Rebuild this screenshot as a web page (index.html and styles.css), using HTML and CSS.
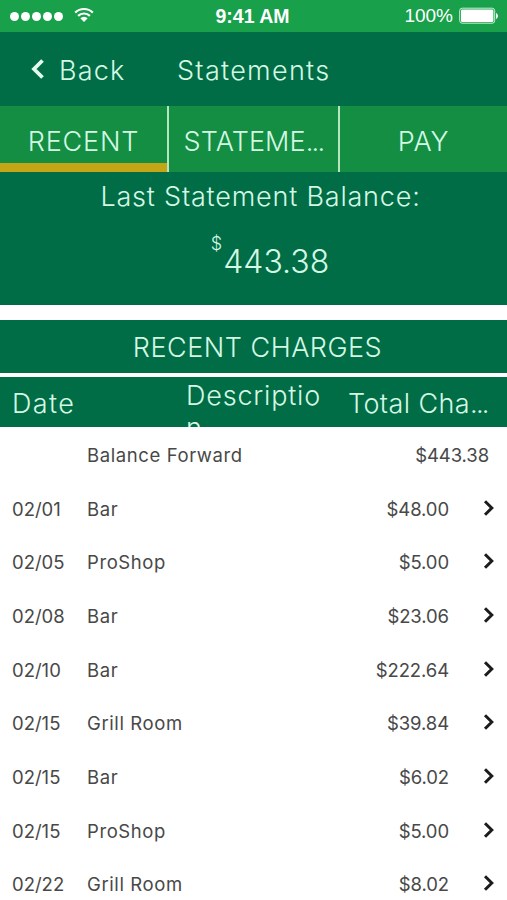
FILE: index.html
```html
<!DOCTYPE html>
<html lang="en">
<head>
    <meta charset="UTF-8">
    <meta name="viewport" content="width=device-width, initial-scale=1.0">
    <title>Statements</title>
    <link rel="stylesheet" href="styles.css">
</head>
<body>
    <!-- Status Bar -->
    <div class="status-bar">
        <div class="signal">
            <span class="dot"></span>
            <span class="dot"></span>
            <span class="dot"></span>
            <span class="dot"></span>
            <span class="dot"></span>
            <svg class="wifi" width="20" height="16" viewBox="0 0 20 16">
                <path d="M1.2 5.6a12.6 12.6 0 0 1 17.6 0M4.1 8.9a8.5 8.5 0 0 1 11.8 0" fill="none" stroke="#fff" stroke-width="2.2"/>
                <path d="M6.3 11.3a5.3 5.3 0 0 1 7.4 0L10 15z" fill="#fff"/>
            </svg>
        </div>
        <span class="time">9:41 AM</span>
        <div class="battery">
            <span class="percent">100%</span>
            <svg width="40" height="18" viewBox="0 0 40 18">
                <rect x="0.7" y="1.2" width="35" height="15" rx="2.5" fill="none" stroke="#c9f0d3" stroke-width="1"/>
                <rect x="2" y="2.5" width="32.4" height="12.4" rx="1.2" fill="#fff"/>
                <path d="M37 6c2.6 1 2.6 5 0 6z" fill="#fff"/>
            </svg>
        </div>
    </div>

    <header>
        <a href="#" class="back">
            <svg width="14" height="20" viewBox="0 0 14 20">
                <path d="M12.500 1.5L4 10l8.500 8.500" fill="none" stroke="#e3faec" stroke-width="3.8"/>
            </svg>
            <span>Back</span>
        </a>
        <h1>Statements</h1>
    </header>

    <nav class="tabs">
        <a href="#" class="tab active">RECENT</a>
        <a href="#" class="tab tab-statements"><span>STATEME<span class="dots">...</span></span></a>
        <a href="#" class="tab">PAY</a>
    </nav>

    <main>
        <section class="balance">
            <h2>Last Statement Balance:</h2>
            <p class="amount"><span class="currency">$</span><span class="value">443.38</span></p>
        </section>

        <h2 class="charges-title">RECENT CHARGES</h2>

        <div class="charges-head">
            <span class="head-date">Date</span>
            <span class="head-description">Descriptio<br>n</span>
            <span class="head-total">Total Cha<span class="dots">...</span></span>
        </div>

        <div class="charges" id="charges"></div>
    </main>

    <script>
        const charges = [
            { date: '', description: 'Balance Forward', total: '$443.38' },
            { date: '02/01', description: 'Bar', total: '$48.00' },
            { date: '02/05', description: 'ProShop', total: '$5.00' },
            { date: '02/08', description: 'Bar', total: '$23.06' },
            { date: '02/10', description: 'Bar', total: '$222.64' },
            { date: '02/15', description: 'Grill Room', total: '$39.84' },
            { date: '02/15', description: 'Bar', total: '$6.02' },
            { date: '02/15', description: 'ProShop', total: '$5.00' },
            { date: '02/22', description: 'Grill Room', total: '$8.02' }
        ];

        const arrow = `
            <svg class="arrow" width="12" height="18" viewBox="0 0 12 18">
                <path d="M2 2.200l6.800 6.800-6.800 6.800" fill="none" stroke="#1c1c1c" stroke-width="3"/>
            </svg>
        `;

        document.getElementById('charges').innerHTML = charges.map((charge) => `
            <div class="charge">
                <span class="date">${charge.date}</span>
                <span class="description">${charge.description}</span>
                <span class="total">${charge.total}</span>
                ${charge.date ? arrow : ''}
            </div>
        `).join('');
    </script>
</body>
</html>
```

FILE: styles.css
```css
/* General Styles */
* {
    box-sizing: border-box;
}

body {
    margin: 0;
    height: 900px;
    overflow: hidden;
    background-color: #fff;
    color: #484848;
    font-family: Inter, "Liberation Sans", sans-serif;
}

h1, h2, p {
    margin: 0;
    font-weight: 300;
}

a {
    color: inherit;
    text-decoration: none;
}

svg {
    display: block;
    flex: none;
}

.dots {
    letter-spacing: -1.7px;
}

/* Status Bar */
.status-bar {
    display: grid;
    grid-template-columns: 1fr auto 1fr;
    align-items: center;
    height: 32px;
    padding: 0 8px 0 10px;
    background-color: #18a04b;
    color: #fff;
    font-family: "Liberation Sans", Arial, sans-serif;
}

.signal {
    display: flex;
    align-items: center;
    gap: 2px;
}

.dot {
    width: 9px;
    height: 9px;
    border-radius: 50%;
    background-color: #fff;
}

.wifi {
    margin: -2px 0 0 9px;
}

.time {
    margin: 0 4px 0 0;
    font-size: 19.500px;
    font-weight: bold;
}

.battery {
    display: flex;
    align-items: center;
    justify-content: flex-end;
    gap: 6px;
    font-size: 19px;
}

/* Header */
header {
    display: flex;
    align-items: center;
    height: 74px;
    padding: 2px 0 0 30px;
    background-color: #006d46;
    color: #d5f8e4;
    font-size: 27px;
}

.back {
    display: flex;
    align-items: center;
    width: 147px;
    gap: 15px;
    font-weight: 300;
    letter-spacing: 1.2px;
}

.back svg {
    margin-top: -3px;
}

header h1 {
    font-size: 27px;
    letter-spacing: 1.3px;
}

/* Tabs */
.tabs {
    display: grid;
    grid-template-columns: 169px 171px 1fr;
    height: 66px;
    background-color: #138e43;
    color: #d5f8e4;
    font-size: 27px;
    font-weight: 300;
    letter-spacing: 0.8px;
}

.tab {
    display: flex;
    align-items: center;
    justify-content: center;
    padding-top: 4px;
    border-right: 2px solid #b5e6bf;
    white-space: nowrap;
}

.tab:last-child {
    border-right: none;
}

.tab.active {
    box-shadow: inset 0 -9px #c4a516;
}

.tab-statements {
    letter-spacing: 0.1px;
}

/* Balance */
.balance {
    height: 133px;
    padding-top: 9px;
    background-color: #006d46;
    color: #d5f8e4;
    text-align: center;
}

.balance h2 {
    font-size: 27px;
    line-height: 32px;
    letter-spacing: 0.8px;
    margin-left: 14px;
}

.amount {
    display: flex;
    justify-content: center;
    margin: 21px 0 0 33px;
}

.currency {
    margin-right: 1px;
    font-size: 18px;
    line-height: 20px;
}

.value {
    font-size: 32px;
    line-height: 55px;
}

/* Recent Charges */
.charges-title {
    height: 53px;
    margin-top: 15px;
    padding-left: 8px;
    background-color: #006d46;
    color: #d5f8e4;
    font-size: 27px;
    line-height: 55px;
    letter-spacing: 0.5px;
    text-align: center;
}

.charges-head {
    display: flex;
    height: 50px;
    margin-top: 4px;
    padding-left: 12px;
    overflow: hidden;
    background-color: #006d46;
    color: #d5f8e4;
    font-size: 27px;
    font-weight: 300;
    line-height: 32px;
    letter-spacing: 0.8px;
    white-space: nowrap;
}

.head-date {
    width: 174px;
    padding-top: 11px;
    letter-spacing: 1.4px;
}

.head-description {
    width: 162px;
    padding-top: 3px;
}

.head-total {
    padding-top: 11px;
    letter-spacing: 0.4px;
}

.charge {
    display: flex;
    align-items: center;
    height: 53.7px;
    padding: 2px 12px 0 12px;
    font-size: 18.500px;
}

.date {
    width: 75px;
}

.description {
    flex-grow: 1;
    letter-spacing: 0.6px;
}

.total {
    margin-right: 6px;
    letter-spacing: -0.1px;
}

.arrow {
    margin: -2px 0 0 28px;
}
```
